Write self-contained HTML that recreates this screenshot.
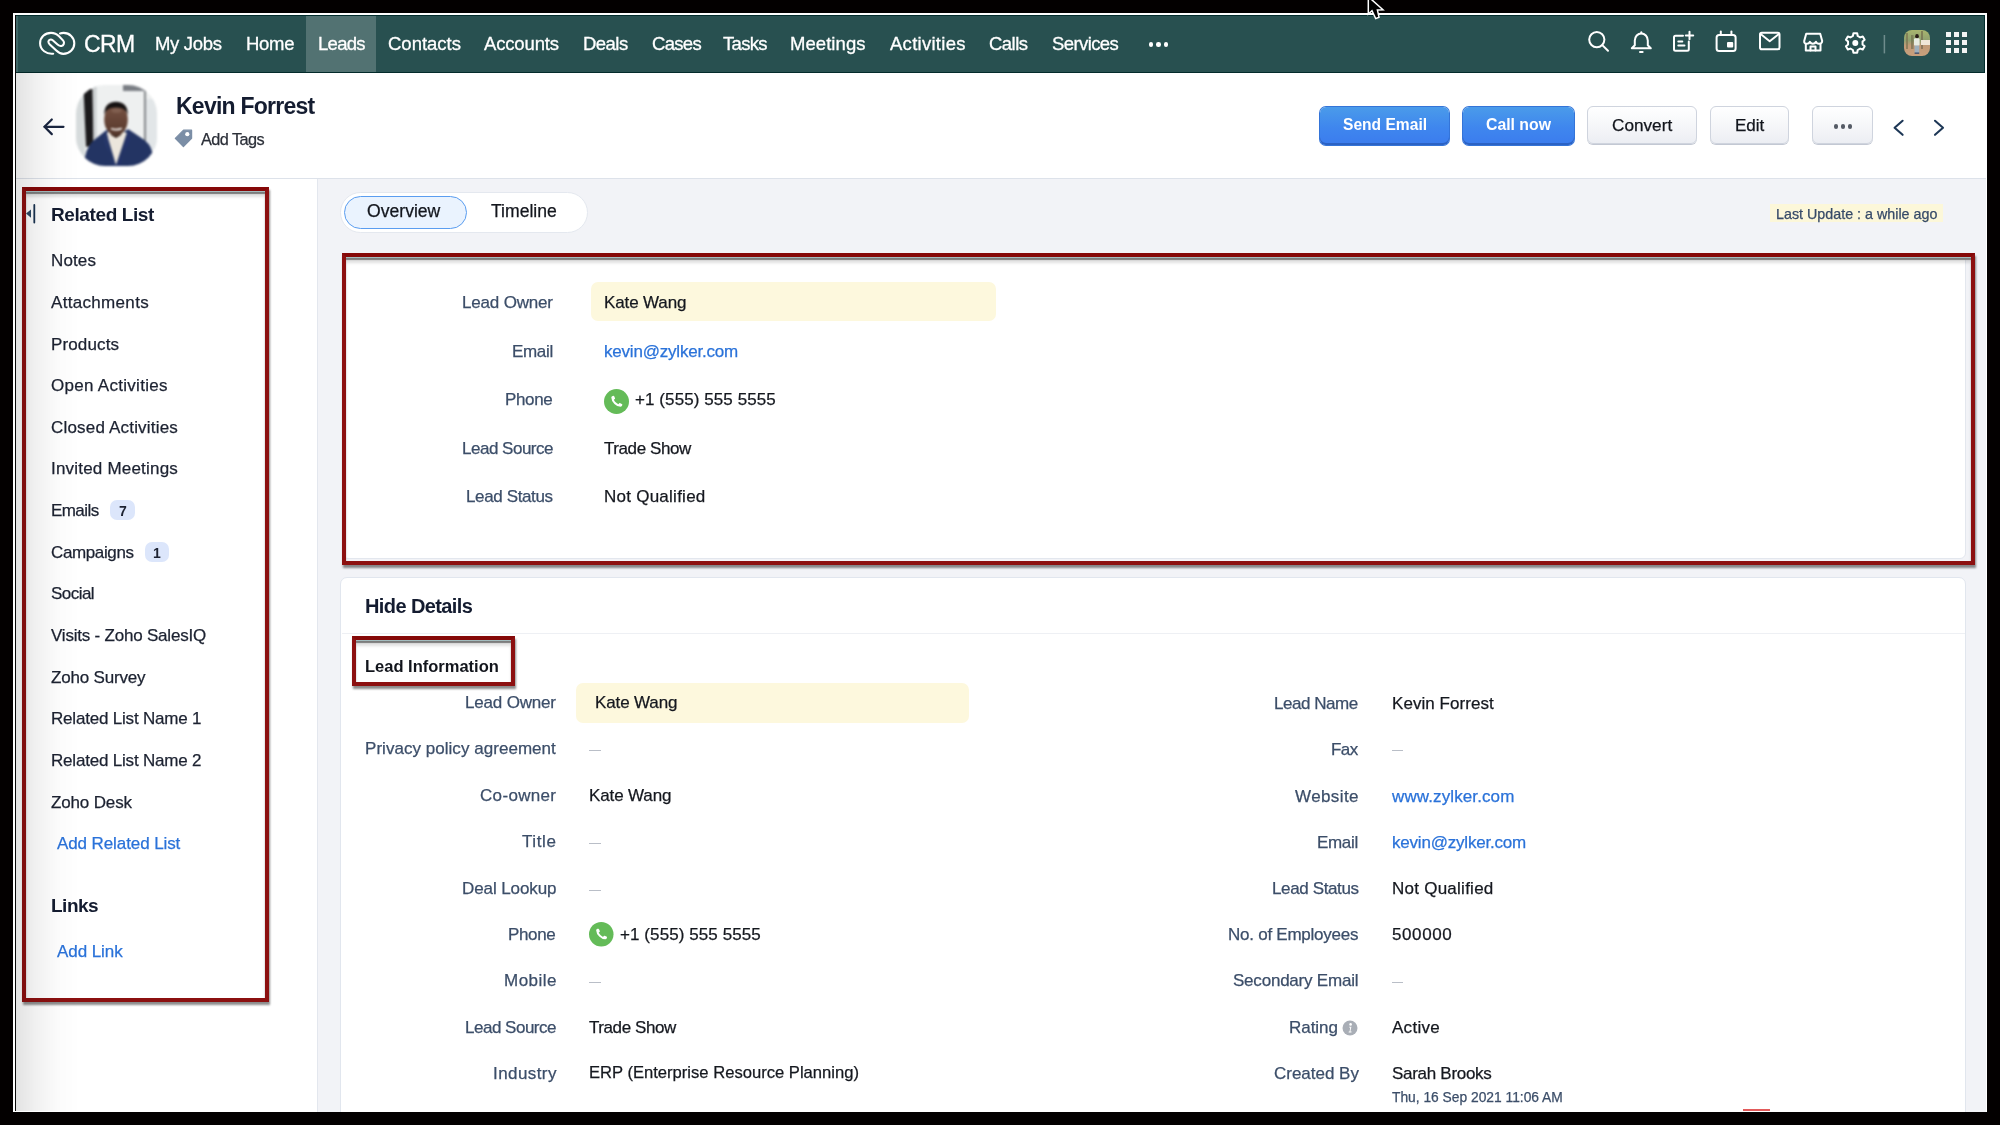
<!DOCTYPE html><html><head><meta charset="utf-8"><style>
*{margin:0;padding:0;box-sizing:border-box}
html,body{width:2000px;height:1125px;overflow:hidden;background:#030000;font-family:"Liberation Sans",sans-serif}
.t{position:absolute;white-space:nowrap;will-change:transform}
.r{position:absolute}
svg{position:absolute;overflow:visible}
</style></head><body><div class="r" style="left:13px;top:13px;width:1974px;height:1099px;background:#fff;"></div>
<div class="r" style="left:16px;top:15px;width:1969px;height:57px;background:#285050;border-top:1px solid #022c2c;border-right:1px solid #022c2c;"></div>
<div class="r" style="left:16px;top:16px;width:2px;height:56px;background:#3f6666;"></div>
<div class="r" style="left:306px;top:16px;width:70px;height:56px;background:#527272;"></div>
<div class="r" style="left:15px;top:72px;width:1970px;height:1px;background:#032b2b;"></div>
<div class="r" style="left:15px;top:73px;width:1971px;height:106px;background:#fff;border-bottom:1px solid #dde2ea;"></div>
<div class="r" style="left:15px;top:179px;width:303px;height:933px;background:#fff;border-right:1px solid #e3e7ee;"></div>
<div class="r" style="left:318px;top:179px;width:1668px;height:933px;background:#f2f3f7;"></div>
<div class="r" style="left:14.6px;top:15px;width:1.4000000000000004px;height:1096px;background:#0b0b0b;"></div>
<div class="t" style="top:32.53px;font-size:23px;line-height:23px;font-weight:400;color:#ffffff;letter-spacing:-0.600px;left:84.00px;-webkit-text-stroke:0.3px #fff;">CRM</div>
<div class="t" style="top:35.14px;font-size:18.5px;line-height:18.5px;font-weight:400;color:#ffffff;letter-spacing:-0.315px;left:155.00px;-webkit-text-stroke:0.3px #fff;">My Jobs</div>
<div class="t" style="top:35.14px;font-size:18.5px;line-height:18.5px;font-weight:400;color:#ffffff;letter-spacing:-0.286px;left:246.00px;-webkit-text-stroke:0.3px #fff;">Home</div>
<div class="t" style="top:35.14px;font-size:18.5px;line-height:18.5px;font-weight:400;color:#ffffff;letter-spacing:-0.700px;left:317.50px;-webkit-text-stroke:0.3px #fff;">Leads</div>
<div class="t" style="top:35.14px;font-size:18.5px;line-height:18.5px;font-weight:400;color:#ffffff;letter-spacing:-0.002px;left:387.60px;-webkit-text-stroke:0.3px #fff;">Contacts</div>
<div class="t" style="top:35.14px;font-size:18.5px;line-height:18.5px;font-weight:400;color:#ffffff;letter-spacing:-0.158px;left:484.00px;-webkit-text-stroke:0.3px #fff;">Accounts</div>
<div class="t" style="top:35.14px;font-size:18.5px;line-height:18.5px;font-weight:400;color:#ffffff;letter-spacing:-0.528px;left:583.30px;-webkit-text-stroke:0.3px #fff;">Deals</div>
<div class="t" style="top:35.14px;font-size:18.5px;line-height:18.5px;font-weight:400;color:#ffffff;letter-spacing:-0.700px;left:652.00px;-webkit-text-stroke:0.3px #fff;">Cases</div>
<div class="t" style="top:35.14px;font-size:18.5px;line-height:18.5px;font-weight:400;color:#ffffff;letter-spacing:-0.700px;left:723.00px;-webkit-text-stroke:0.3px #fff;">Tasks</div>
<div class="t" style="top:35.14px;font-size:18.5px;line-height:18.5px;font-weight:400;color:#ffffff;letter-spacing:0.060px;left:790.00px;-webkit-text-stroke:0.3px #fff;">Meetings</div>
<div class="t" style="top:35.14px;font-size:18.5px;line-height:18.5px;font-weight:400;color:#ffffff;letter-spacing:0.278px;left:889.50px;-webkit-text-stroke:0.3px #fff;">Activities</div>
<div class="t" style="top:35.14px;font-size:18.5px;line-height:18.5px;font-weight:400;color:#ffffff;letter-spacing:-0.531px;left:989.00px;-webkit-text-stroke:0.3px #fff;">Calls</div>
<div class="t" style="top:35.14px;font-size:18.5px;line-height:18.5px;font-weight:400;color:#ffffff;letter-spacing:-0.600px;left:1052.00px;-webkit-text-stroke:0.3px #fff;">Services</div>
<div class="r" style="left:1148.5px;top:42px;width:4.6px;height:4.6px;border-radius:50%;background:#fff"></div>
<div class="r" style="left:1156.1000000000001px;top:42px;width:4.6px;height:4.6px;border-radius:50%;background:#fff"></div>
<div class="r" style="left:1163.7px;top:42px;width:4.6px;height:4.6px;border-radius:50%;background:#fff"></div>
<svg width="40" height="30" style="left:37px;top:29px" viewBox="37 29 40 30">
<g fill="none" stroke="#fff" stroke-width="2.1" stroke-linecap="round">
<path d="M53.2 53.7 C46.5 54.4 40.1 50 40.1 43.3 C40.1 37.3 45 32.9 51 32.9 C54.5 32.9 57 34.2 59.3 36.5 L63.2 40.6 C64.8 42.4 63.9 45.6 61.3 46"/>
<path d="M61.3 46 C59.8 46.2 58.8 45.6 57.5 44.5 L52.7 40.3 C51 38.9 48.6 39.6 48.4 41.6 C48.3 42.7 48.9 43.5 49.8 44.4 L56.3 50.6 C58.3 52.6 60.5 53.9 63.3 53.9 C69.5 53.9 74.3 49.2 74.3 43.3 C74.3 37.5 69.5 32.9 63.6 32.9 C62.3 32.9 61 33.1 60 33.4"/>
</g></svg>
<svg width="400" height="40" style="left:1580px;top:25px" viewBox="1580 25 400 40">
<g fill="none" stroke="#ffffff" stroke-width="2" stroke-linecap="round" stroke-linejoin="round">
<circle cx="1596.8" cy="39.6" r="7.6"/>
<line x1="1602.3" y1="45.1" x2="1608" y2="50.8"/>
<path d="M1631.8 48.2 L1634.8 45.3 L1634.8 40.6 A6.5 7.2 0 0 1 1647.8 40.6 L1647.8 45.3 L1650.8 48.2 Z"/>
<line x1="1641.3" y1="32.2" x2="1641.3" y2="33.2"/>
<line x1="1640" y1="52" x2="1642.6" y2="52"/>
<path d="M1683 35.8 L1675.5 35.8 Q1674 35.8 1674 37.3 L1674 49.3 Q1674 50.8 1675.5 50.8 L1687.2 50.8 Q1688.8 50.8 1688.8 49.3 L1688.8 41.5"/>
<line x1="1678.3" y1="41.6" x2="1682.3" y2="41.6"/>
<line x1="1678.3" y1="45.6" x2="1684.5" y2="45.6"/>
<line x1="1689.5" y1="31.8" x2="1689.5" y2="39.2"/>
<line x1="1685.8" y1="35.5" x2="1693.2" y2="35.5"/>
<rect x="1716.6" y="35" width="19" height="16" rx="2.5"/>
<line x1="1720.8" y1="31.5" x2="1720.8" y2="35"/>
<line x1="1731.4" y1="31.5" x2="1731.4" y2="35"/>
<rect x="1760" y="32.8" width="19.5" height="16.4" rx="1.8"/>
<path d="M1760.6 34 L1769.7 41.2 L1778.9 34"/>
<path d="M1804.2 41 L1806.2 33.8 L1820.2 33.8 L1822.2 41 Q1822 43.8 1819 43.8 Q1816.5 43.8 1816 41.8 Q1815 43.8 1812.8 43.8 Q1810.8 43.8 1809.8 41.8 Q1809 43.8 1806.8 43.8 Q1804 43.8 1804.2 41 Z"/>
<path d="M1805.8 44 L1805.8 50.5 L1820.5 50.5 L1820.5 44"/>
<path d="M1810.5 50.5 L1810.5 46.5 L1815.5 46.5 L1815.5 50.5"/>
</g>
<rect x="1727" y="42" width="6.2" height="5.6" rx="1" fill="#ffffff"/>
<g transform="translate(1855.3 43)">
<path fill="none" stroke="#ffffff" stroke-width="2" stroke-linejoin="round" d="M-2.41 -7.00 L-1.89 -9.72 L1.89 -9.72 L2.41 -7.00 L4.85 -5.58 L7.47 -6.49 L9.36 -3.22 L7.26 -1.41 L7.26 1.41 L9.36 3.22 L7.47 6.49 L4.85 5.58 L2.41 7.00 L1.89 9.72 L-1.89 9.72 L-2.41 7.00 L-4.85 5.58 L-7.47 6.49 L-9.36 3.22 L-7.26 1.41 L-7.26 -1.41 L-9.36 -3.22 L-7.47 -6.49 L-4.85 -5.58 Z"/>
<circle r="3" fill="#ffffff"/>
</g>
<line x1="1884.4" y1="35" x2="1884.4" y2="53.4" stroke="#6f8c8c" stroke-width="1.5"/>
</svg>
<svg width="26" height="26" style="left:1904.2px;top:30.1px;filter:blur(0.75px)" viewBox="0 0 26 26">
<defs><clipPath id="ua"><rect width="26" height="26" rx="8"/></clipPath>
<filter id="ub"><feGaussianBlur stdDeviation="0.6"/></filter>
<linearGradient id="ug" x1="0" y1="0" x2="0" y2="1"><stop offset="0" stop-color="#a9b56e"/><stop offset="0.4" stop-color="#8fa070"/><stop offset="0.6" stop-color="#c09a78"/><stop offset="1" stop-color="#c9a07c"/></linearGradient></defs>
<g clip-path="url(#ua)"><g>
<rect width="26" height="26" fill="url(#ug)"/>
<rect x="2" y="3" width="2" height="16" fill="#7a7250" opacity="0.7"/>
<rect x="7" y="5" width="2.5" height="14" fill="#6e6a4a" opacity="0.6"/>
<rect x="17" y="1" width="2" height="18" fill="#6a6048" opacity="0.6"/>
<rect x="17" y="10" width="9" height="5" fill="#efe6d8"/>
<ellipse cx="13" cy="6.3" rx="1.8" ry="2.3" fill="#2a1d18"/>
<rect x="10" y="8.2" width="5.6" height="7.6" rx="1.2" fill="#e8ece2"/>
<rect x="10.6" y="15.6" width="4.6" height="7.4" fill="#9fb0bc"/>
<rect x="10.6" y="22.5" width="4.6" height="1.3" fill="#3a4a6a"/>
</g></g></svg>
<div class="r" style="left:1945.8px;top:32.2px;width:5.2000000000000455px;height:4.899999999999999px;background:#f4f4f4;"></div>
<div class="r" style="left:1953.9px;top:32.2px;width:5.199999999999818px;height:4.899999999999999px;background:#f4f4f4;"></div>
<div class="r" style="left:1962.0px;top:32.2px;width:5.2000000000000455px;height:4.899999999999999px;background:#f4f4f4;"></div>
<div class="r" style="left:1945.8px;top:40.3px;width:5.2000000000000455px;height:4.900000000000006px;background:#f4f4f4;"></div>
<div class="r" style="left:1953.9px;top:40.3px;width:5.199999999999818px;height:4.900000000000006px;background:#f4f4f4;"></div>
<div class="r" style="left:1962.0px;top:40.3px;width:5.2000000000000455px;height:4.900000000000006px;background:#f4f4f4;"></div>
<div class="r" style="left:1945.8px;top:48.4px;width:5.2000000000000455px;height:4.899999999999999px;background:#f4f4f4;"></div>
<div class="r" style="left:1953.9px;top:48.4px;width:5.199999999999818px;height:4.899999999999999px;background:#f4f4f4;"></div>
<div class="r" style="left:1962.0px;top:48.4px;width:5.2000000000000455px;height:4.899999999999999px;background:#f4f4f4;"></div>
<svg width="24" height="20" style="left:42px;top:117px" viewBox="42 117 24 20">
<g fill="none" stroke="#1a2640" stroke-width="2.2" stroke-linecap="round" stroke-linejoin="round">
<line x1="44.5" y1="126.8" x2="63.5" y2="126.8"/><path d="M51.8 119.5 L44.5 126.8 L51.8 134.1"/></g></svg>
<svg width="81" height="81" style="left:76px;top:85px;filter:blur(0.8px)" viewBox="0 0 81 81">
<defs><clipPath id="av"><rect x="0" y="0" width="81" height="81" rx="29" ry="29"/></clipPath>
<filter id="bl" x="-5%" y="-5%" width="110%" height="110%"><feGaussianBlur stdDeviation="0.5"/></filter>
<linearGradient id="fg" x1="0" y1="0" x2="0" y2="1"><stop offset="0" stop-color="#7a5444"/><stop offset="1" stop-color="#55372b"/></linearGradient></defs>
<g clip-path="url(#av)"><g>
<rect width="81" height="81" fill="#eef0f0"/>
<rect x="0" y="0" width="9" height="81" fill="#d6dbdc"/>
<path d="M7.5 4 L16.5 4 L17.5 60 L10 62 Z" fill="#1b1a1c"/>
<rect x="17.5" y="0" width="3" height="81" fill="#c9cdcf"/>
<rect x="47" y="0" width="22" height="6" fill="#7a7e84"/>
<rect x="68.2" y="6" width="1.6" height="56" fill="#6a6e72"/>
<rect x="70" y="14" width="11" height="50" fill="#e2e6e8"/>
<path d="M9 81 L9 72 Q12 58 20 53.5 L30.5 45 L40 50 L52.4 44.2 L64 52 Q74 58 76 66 L77 81 Z" fill="#233463"/>
<path d="M30.5 48 L40 80 L50.8 48 L45 45 L40 50 L35 45 Z" fill="#ece6dc"/>
<path d="M30.5 45 Q26 52 29 60 L40 81 L36 81 Z" fill="#26376a"/>
<path d="M52.4 44.2 Q56 52 52 60 L40 81 L44 81 Z" fill="#24336a"/>
<path d="M34 42 L46 42 L45 50 L40 53 L35 50 Z" fill="#3d261d"/>
<ellipse cx="40" cy="34.5" rx="11.8" ry="16" fill="url(#fg)"/>
<path d="M28.2 30 Q28 17 40 16.8 Q52 17 51.8 30 Q50 22 40 22.5 Q30 22 28.2 30 Z" fill="#161212"/>
<ellipse cx="40.5" cy="25.5" rx="5" ry="2.5" fill="#8a6a5c" opacity="0.6"/>
<path d="M35 43.6 Q40.5 46.5 46 43.4 Q40.5 45 35 43.6 Z" fill="#f4efea" stroke="#f4efea" stroke-width="1.2"/>
</g></g></svg>
<div class="t" style="top:95.03px;font-size:23px;line-height:23px;font-weight:700;color:#141c30;letter-spacing:-0.750px;left:175.50px;">Kevin Forrest</div>
<svg width="20" height="20" style="left:173px;top:128px" viewBox="173 128 20 20">
<path d="M183.5 130.2 L191.6 130.2 L191.6 138.3 L183.4 146.5 L175.3 138.4 Z" fill="#7b8ea6" stroke="#7b8ea6" stroke-width="1.2" stroke-linejoin="round"/>
<circle cx="187.3" cy="134.2" r="2.1" fill="#fff"/></svg>
<div class="t" style="top:130.90px;font-size:16.3px;line-height:16.3px;font-weight:400;color:#2b2f38;-webkit-text-stroke:0.25px #2b2f38;letter-spacing:-0.550px;left:201.00px;">Add Tags</div>
<div class="r" style="left:1319.5px;top:106.5px;width:129.0px;height:38.0px;background:linear-gradient(180deg,#4a9bea 0%,#3f86ee 55%,#3b7cee 100%);border-radius:6px;box-shadow:inset 0 -2px 0 #2b62c4, 0 0 0 1px #3474d8;"></div>
<div class="r" style="left:1462.5px;top:106.5px;width:111.5px;height:38.0px;background:linear-gradient(180deg,#4a9bea 0%,#3f86ee 55%,#3b7cee 100%);border-radius:6px;box-shadow:inset 0 -2px 0 #2b62c4, 0 0 0 1px #3474d8;"></div>
<div class="r" style="left:1587px;top:106.3px;width:110px;height:38.2px;background:linear-gradient(180deg,#ffffff 0%,#f4f5f8 60%,#eceef3 100%);border-radius:6px;border:1px solid #cfd4de;box-shadow:0 1px 0 #c3c8d3;"></div>
<div class="r" style="left:1710px;top:106.3px;width:79px;height:38.2px;background:linear-gradient(180deg,#ffffff 0%,#f4f5f8 60%,#eceef3 100%);border-radius:6px;border:1px solid #cfd4de;box-shadow:0 1px 0 #c3c8d3;"></div>
<div class="r" style="left:1812px;top:106.3px;width:60.5px;height:38.2px;background:linear-gradient(180deg,#ffffff 0%,#f4f5f8 60%,#eceef3 100%);border-radius:6px;border:1px solid #cfd4de;box-shadow:0 1px 0 #c3c8d3;"></div>
<div class="t" style="top:117.49px;font-size:15.6px;line-height:15.6px;font-weight:700;color:#fff;left:1342.50px;">Send Email</div>
<div class="t" style="top:117.32px;font-size:15.8px;line-height:15.8px;font-weight:700;color:#fff;left:1485.80px;">Call now</div>
<div class="t" style="top:116.64px;font-size:17.2px;line-height:17.2px;font-weight:400;color:#12151c;-webkit-text-stroke:0.25px #12151c;left:1612.00px;">Convert</div>
<div class="t" style="top:116.81px;font-size:17px;line-height:17px;font-weight:400;color:#12151c;-webkit-text-stroke:0.25px #12151c;left:1734.90px;">Edit</div>
<div class="r" style="left:1833.6px;top:124.2px;width:4.4px;height:4.4px;border-radius:50%;background:#555b66"></div>
<div class="r" style="left:1840.7px;top:124.2px;width:4.4px;height:4.4px;border-radius:50%;background:#555b66"></div>
<div class="r" style="left:1847.8px;top:124.2px;width:4.4px;height:4.4px;border-radius:50%;background:#555b66"></div>
<svg width="60" height="20" style="left:1890px;top:118px" viewBox="1890 118 60 20">
<g fill="none" stroke="#1d3756" stroke-width="2.1" stroke-linecap="round" stroke-linejoin="round">
<path d="M1902.6 120.8 L1894.6 127.8 L1902.6 134.8"/>
<path d="M1935 120.8 L1943 127.8 L1935 134.8"/></g></svg>
<svg width="14" height="22" style="left:24px;top:203px" viewBox="24 203 14 22">
<path d="M31 209.5 L26 213.6 L31 217.7 Z" fill="#2c4a66"/>
<line x1="34.3" y1="205" x2="34.3" y2="222.5" stroke="#1a3350" stroke-width="1.8" stroke-linecap="round"/></svg>
<div class="t" style="top:205.41px;font-size:19px;line-height:19px;font-weight:700;color:#141c30;letter-spacing:-0.400px;left:51.00px;">Related List</div>
<div class="t" style="top:251.61px;font-size:17px;line-height:17px;font-weight:400;color:#1c2231;-webkit-text-stroke:0.25px #1c2231;letter-spacing:0.120px;left:51.00px;">Notes</div>
<div class="t" style="top:294.31px;font-size:17px;line-height:17px;font-weight:400;color:#1c2231;-webkit-text-stroke:0.25px #1c2231;letter-spacing:0.320px;left:51.00px;">Attachments</div>
<div class="t" style="top:336.01px;font-size:17px;line-height:17px;font-weight:400;color:#1c2231;-webkit-text-stroke:0.25px #1c2231;letter-spacing:0.129px;left:51.00px;">Products</div>
<div class="t" style="top:377.21px;font-size:17px;line-height:17px;font-weight:400;color:#1c2231;-webkit-text-stroke:0.25px #1c2231;letter-spacing:0.289px;left:51.00px;">Open Activities</div>
<div class="t" style="top:419.01px;font-size:17px;line-height:17px;font-weight:400;color:#1c2231;-webkit-text-stroke:0.25px #1c2231;letter-spacing:0.189px;left:51.00px;">Closed Activities</div>
<div class="t" style="top:460.41px;font-size:17px;line-height:17px;font-weight:400;color:#1c2231;-webkit-text-stroke:0.25px #1c2231;letter-spacing:0.200px;left:51.00px;">Invited Meetings</div>
<div class="t" style="top:502.11px;font-size:17px;line-height:17px;font-weight:400;color:#1c2231;-webkit-text-stroke:0.25px #1c2231;letter-spacing:-0.563px;left:51.00px;">Emails</div>
<div class="t" style="top:544.21px;font-size:17px;line-height:17px;font-weight:400;color:#1c2231;-webkit-text-stroke:0.25px #1c2231;letter-spacing:-0.375px;left:51.00px;">Campaigns</div>
<div class="t" style="top:585.41px;font-size:17px;line-height:17px;font-weight:400;color:#1c2231;-webkit-text-stroke:0.25px #1c2231;letter-spacing:-0.542px;left:51.00px;">Social</div>
<div class="t" style="top:626.61px;font-size:17px;line-height:17px;font-weight:400;color:#1c2231;-webkit-text-stroke:0.25px #1c2231;letter-spacing:-0.208px;left:51.00px;">Visits - Zoho SalesIQ</div>
<div class="t" style="top:669.21px;font-size:17px;line-height:17px;font-weight:400;color:#1c2231;-webkit-text-stroke:0.25px #1c2231;letter-spacing:-0.179px;left:51.00px;">Zoho Survey</div>
<div class="t" style="top:710.41px;font-size:17px;line-height:17px;font-weight:400;color:#1c2231;-webkit-text-stroke:0.25px #1c2231;letter-spacing:-0.196px;left:51.00px;">Related List Name 1</div>
<div class="t" style="top:752.01px;font-size:17px;line-height:17px;font-weight:400;color:#1c2231;-webkit-text-stroke:0.25px #1c2231;letter-spacing:-0.196px;left:51.00px;">Related List Name 2</div>
<div class="t" style="top:794.01px;font-size:17px;line-height:17px;font-weight:400;color:#1c2231;-webkit-text-stroke:0.25px #1c2231;letter-spacing:-0.150px;left:51.00px;">Zoho Desk</div>
<div class="r" style="left:110px;top:500px;width:25px;height:20px;background:#dce6fb;border-radius:7px;"></div>
<div class="t" style="top:504.15px;font-size:14px;line-height:14px;font-weight:700;color:#1c2231;left:122.50px;transform:translateX(-50%);">7</div>
<div class="r" style="left:144.5px;top:541.5px;width:24.5px;height:20.5px;background:#dce6fb;border-radius:7px;"></div>
<div class="t" style="top:545.65px;font-size:14px;line-height:14px;font-weight:700;color:#1c2231;left:156.80px;transform:translateX(-50%);">1</div>
<div class="t" style="top:835.01px;font-size:17px;line-height:17px;font-weight:400;color:#2a72d9;-webkit-text-stroke:0.25px #2a72d9;letter-spacing:-0.097px;left:56.70px;">Add Related List</div>
<div class="t" style="top:895.91px;font-size:19px;line-height:19px;font-weight:700;color:#141c30;letter-spacing:-0.500px;left:51.00px;">Links</div>
<div class="t" style="top:943.21px;font-size:17px;line-height:17px;font-weight:400;color:#2a72d9;-webkit-text-stroke:0.25px #2a72d9;letter-spacing:-0.067px;left:56.70px;">Add Link</div>
<div class="r" style="left:340px;top:192px;width:248px;height:41px;background:#fff;border-radius:21px;border:1px solid #e4e8ef;"></div>
<div class="r" style="left:344px;top:196px;width:123px;height:33px;background:#eaf3fe;border-radius:17px;border:1.5px solid #5a9df0;"></div>
<div class="t" style="top:203.40px;font-size:17.6px;line-height:17.6px;font-weight:400;color:#13161d;-webkit-text-stroke:0.25px #13161d;left:367.00px;">Overview</div>
<div class="t" style="top:203.40px;font-size:17.6px;line-height:17.6px;font-weight:400;color:#13161d;-webkit-text-stroke:0.25px #13161d;left:491.00px;">Timeline</div>
<div class="r" style="left:1770px;top:204px;width:173px;height:18px;background:#fcf7d9;"></div>
<div class="t" style="top:207.19px;font-size:14.3px;line-height:14.3px;font-weight:400;color:#364a68;-webkit-text-stroke:0.25px #364a68;left:1776.00px;">Last Update : a while ago</div>
<div class="r" style="left:342px;top:254px;width:1624px;height:305px;background:#fff;border-radius:6px;border:1px solid #e3e7ee;"></div>
<div class="r" style="left:591px;top:282px;width:405px;height:39px;background:#fdf8dd;border-radius:7px;"></div>
<div class="t" style="top:293.91px;font-size:17px;line-height:17px;font-weight:400;color:#3c4e69;-webkit-text-stroke:0.25px #3c4e69;letter-spacing:-0.181px;right:1447.18px;text-align:right;">Lead Owner</div>
<div class="t" style="top:293.91px;font-size:17px;line-height:17px;font-weight:400;color:#15181f;-webkit-text-stroke:0.25px #15181f;letter-spacing:-0.123px;left:604.00px;">Kate Wang</div>
<div class="t" style="top:343.11px;font-size:17px;line-height:17px;font-weight:400;color:#3c4e69;-webkit-text-stroke:0.25px #3c4e69;letter-spacing:-0.329px;right:1447.33px;text-align:right;">Email</div>
<div class="t" style="top:343.11px;font-size:17px;line-height:17px;font-weight:400;color:#2a72d9;-webkit-text-stroke:0.25px #2a72d9;letter-spacing:-0.197px;left:604.00px;">kevin@zylker.com</div>
<div class="t" style="top:391.41px;font-size:17px;line-height:17px;font-weight:400;color:#3c4e69;-webkit-text-stroke:0.25px #3c4e69;letter-spacing:-0.343px;right:1447.34px;text-align:right;">Phone</div>
<div class="t" style="top:391.41px;font-size:17px;line-height:17px;font-weight:400;color:#15181f;-webkit-text-stroke:0.25px #15181f;letter-spacing:0.086px;left:635.00px;">+1 (555) 555 5555</div>
<div class="t" style="top:440.41px;font-size:17px;line-height:17px;font-weight:400;color:#3c4e69;-webkit-text-stroke:0.25px #3c4e69;letter-spacing:-0.491px;right:1447.49px;text-align:right;">Lead Source</div>
<div class="t" style="top:440.41px;font-size:17px;line-height:17px;font-weight:400;color:#15181f;-webkit-text-stroke:0.25px #15181f;letter-spacing:-0.415px;left:604.00px;">Trade Show</div>
<div class="t" style="top:488.41px;font-size:17px;line-height:17px;font-weight:400;color:#3c4e69;-webkit-text-stroke:0.25px #3c4e69;letter-spacing:-0.375px;right:1447.38px;text-align:right;">Lead Status</div>
<div class="t" style="top:488.41px;font-size:17px;line-height:17px;font-weight:400;color:#15181f;-webkit-text-stroke:0.25px #15181f;letter-spacing:0.252px;left:604.00px;">Not Qualified</div>
<svg width="25" height="25" style="left:603.5px;top:389px" viewBox="0 0 24 24">
<circle cx="12" cy="12" r="12" fill="#64bb58"/>
<path d="M8.3 6.6 Q7.2 7 7 8.2 Q7.1 11.6 10 14.3 Q12.7 17 15.9 17 Q17.1 16.8 17.5 15.7 L17.6 14.9 Q17.5 14.5 17.1 14.3 L15.2 13.5 Q14.7 13.4 14.4 13.8 L13.8 14.6 Q12.3 13.9 11.2 12.8 Q10.1 11.7 9.5 10.3 L10.3 9.7 Q10.7 9.4 10.6 8.9 L9.8 7 Q9.6 6.6 9.2 6.5 Z" fill="#fff"/></svg>
<div class="r" style="left:340px;top:577px;width:1626px;height:548px;background:#fff;border-radius:7px;border:1px solid #e1e6ee;"></div>
<div class="r" style="left:342px;top:633px;width:1623px;height:1px;background:#eef0f4;"></div>
<div class="t" style="top:596.27px;font-size:20px;line-height:20px;font-weight:700;color:#141c30;letter-spacing:-0.600px;left:365.00px;">Hide Details</div>
<div class="t" style="top:658.03px;font-size:16.5px;line-height:16.5px;font-weight:700;color:#12151c;left:365.00px;">Lead Information</div>
<div class="r" style="left:576px;top:682.5px;width:393px;height:40.5px;background:#fdf8dd;border-radius:7px;"></div>
<div class="t" style="top:694.41px;font-size:17px;line-height:17px;font-weight:400;color:#3c4e69;-webkit-text-stroke:0.25px #3c4e69;letter-spacing:-0.181px;right:1444.18px;text-align:right;">Lead Owner</div>
<div class="t" style="top:694.41px;font-size:17px;line-height:17px;font-weight:400;color:#15181f;-webkit-text-stroke:0.25px #15181f;letter-spacing:-0.123px;left:595.00px;">Kate Wang</div>
<div class="t" style="top:739.61px;font-size:17px;line-height:17px;font-weight:400;color:#3c4e69;-webkit-text-stroke:0.25px #3c4e69;letter-spacing:0.038px;right:1443.96px;text-align:right;">Privacy policy agreement</div>
<div class="r" style="left:589px;top:750px;width:12px;height:1px;background:#b9bec7;"></div>
<div class="t" style="top:786.81px;font-size:17px;line-height:17px;font-weight:400;color:#3c4e69;-webkit-text-stroke:0.25px #3c4e69;letter-spacing:0.328px;right:1443.67px;text-align:right;">Co-owner</div>
<div class="t" style="top:786.81px;font-size:17px;line-height:17px;font-weight:400;color:#15181f;-webkit-text-stroke:0.25px #15181f;letter-spacing:-0.123px;left:589.00px;">Kate Wang</div>
<div class="t" style="top:833.41px;font-size:17px;line-height:17px;font-weight:400;color:#3c4e69;-webkit-text-stroke:0.25px #3c4e69;letter-spacing:0.600px;right:1443.40px;text-align:right;">Title</div>
<div class="r" style="left:589px;top:843px;width:12px;height:1px;background:#b9bec7;"></div>
<div class="t" style="top:879.61px;font-size:17px;line-height:17px;font-weight:400;color:#3c4e69;-webkit-text-stroke:0.25px #3c4e69;letter-spacing:-0.097px;right:1444.10px;text-align:right;">Deal Lookup</div>
<div class="r" style="left:589px;top:890px;width:12px;height:1px;background:#b9bec7;"></div>
<div class="t" style="top:925.81px;font-size:17px;line-height:17px;font-weight:400;color:#3c4e69;-webkit-text-stroke:0.25px #3c4e69;letter-spacing:-0.343px;right:1444.34px;text-align:right;">Phone</div>
<div class="t" style="top:925.81px;font-size:17px;line-height:17px;font-weight:400;color:#15181f;-webkit-text-stroke:0.25px #15181f;letter-spacing:0.086px;left:620.00px;">+1 (555) 555 5555</div>
<div class="t" style="top:972.41px;font-size:17px;line-height:17px;font-weight:400;color:#3c4e69;-webkit-text-stroke:0.25px #3c4e69;letter-spacing:0.481px;right:1443.52px;text-align:right;">Mobile</div>
<div class="r" style="left:589px;top:982px;width:12px;height:1px;background:#b9bec7;"></div>
<div class="t" style="top:1018.91px;font-size:17px;line-height:17px;font-weight:400;color:#3c4e69;-webkit-text-stroke:0.25px #3c4e69;letter-spacing:-0.491px;right:1444.49px;text-align:right;">Lead Source</div>
<div class="t" style="top:1018.91px;font-size:17px;line-height:17px;font-weight:400;color:#15181f;-webkit-text-stroke:0.25px #15181f;letter-spacing:-0.415px;left:589.00px;">Trade Show</div>
<div class="t" style="top:1065.11px;font-size:17px;line-height:17px;font-weight:400;color:#3c4e69;-webkit-text-stroke:0.25px #3c4e69;letter-spacing:0.417px;right:1443.58px;text-align:right;">Industry</div>
<div class="t" style="top:1065.44px;font-size:16.6px;line-height:16.6px;font-weight:400;color:#15181f;-webkit-text-stroke:0.25px #15181f;left:589.00px;">ERP (Enterprise Resource Planning)</div>
<svg width="24.5" height="24.5" style="left:589.2px;top:922.3px" viewBox="0 0 24 24">
<circle cx="12" cy="12" r="12" fill="#64bb58"/>
<path d="M8.3 6.6 Q7.2 7 7 8.2 Q7.1 11.6 10 14.3 Q12.7 17 15.9 17 Q17.1 16.8 17.5 15.7 L17.6 14.9 Q17.5 14.5 17.1 14.3 L15.2 13.5 Q14.7 13.4 14.4 13.8 L13.8 14.6 Q12.3 13.9 11.2 12.8 Q10.1 11.7 9.5 10.3 L10.3 9.7 Q10.7 9.4 10.6 8.9 L9.8 7 Q9.6 6.6 9.2 6.5 Z" fill="#fff"/></svg>
<div class="t" style="top:694.91px;font-size:17px;line-height:17px;font-weight:400;color:#3c4e69;-webkit-text-stroke:0.25px #3c4e69;letter-spacing:-0.461px;right:641.96px;text-align:right;">Lead Name</div>
<div class="t" style="top:694.91px;font-size:17px;line-height:17px;font-weight:400;color:#15181f;-webkit-text-stroke:0.25px #15181f;letter-spacing:0.051px;left:1391.70px;">Kevin Forrest</div>
<div class="t" style="top:740.61px;font-size:17px;line-height:17px;font-weight:400;color:#3c4e69;-webkit-text-stroke:0.25px #3c4e69;letter-spacing:-0.600px;right:642.10px;text-align:right;">Fax</div>
<div class="r" style="left:1391.5px;top:750px;width:11.5px;height:1px;background:#b9bec7;"></div>
<div class="t" style="top:787.61px;font-size:17px;line-height:17px;font-weight:400;color:#3c4e69;-webkit-text-stroke:0.25px #3c4e69;letter-spacing:0.398px;right:641.10px;text-align:right;">Website</div>
<div class="t" style="top:787.61px;font-size:17px;line-height:17px;font-weight:400;color:#2a72d9;-webkit-text-stroke:0.25px #2a72d9;letter-spacing:0.106px;left:1391.70px;">www.zylker.com</div>
<div class="t" style="top:833.81px;font-size:17px;line-height:17px;font-weight:400;color:#3c4e69;-webkit-text-stroke:0.25px #3c4e69;letter-spacing:-0.329px;right:641.83px;text-align:right;">Email</div>
<div class="t" style="top:833.81px;font-size:17px;line-height:17px;font-weight:400;color:#2a72d9;-webkit-text-stroke:0.25px #2a72d9;letter-spacing:-0.197px;left:1391.70px;">kevin@zylker.com</div>
<div class="t" style="top:880.01px;font-size:17px;line-height:17px;font-weight:400;color:#3c4e69;-webkit-text-stroke:0.25px #3c4e69;letter-spacing:-0.375px;right:641.88px;text-align:right;">Lead Status</div>
<div class="t" style="top:880.01px;font-size:17px;line-height:17px;font-weight:400;color:#15181f;-webkit-text-stroke:0.25px #15181f;letter-spacing:0.252px;left:1391.70px;">Not Qualified</div>
<div class="t" style="top:925.61px;font-size:17px;line-height:17px;font-weight:400;color:#3c4e69;-webkit-text-stroke:0.25px #3c4e69;letter-spacing:-0.246px;right:641.75px;text-align:right;">No. of Employees</div>
<div class="t" style="top:925.61px;font-size:17px;line-height:17px;font-weight:400;color:#15181f;-webkit-text-stroke:0.25px #15181f;letter-spacing:0.600px;left:1391.70px;">500000</div>
<div class="t" style="top:972.21px;font-size:17px;line-height:17px;font-weight:400;color:#3c4e69;-webkit-text-stroke:0.25px #3c4e69;letter-spacing:-0.215px;right:641.72px;text-align:right;">Secondary Email</div>
<div class="r" style="left:1391.5px;top:982px;width:11.5px;height:1px;background:#b9bec7;"></div>
<div class="t" style="top:1018.91px;font-size:17px;line-height:17px;font-weight:400;color:#3c4e69;-webkit-text-stroke:0.25px #3c4e69;letter-spacing:-0.028px;right:662.53px;text-align:right;">Rating</div>
<svg width="16" height="16" style="left:1342px;top:1019.5px" viewBox="0 0 16 16"><circle cx="8" cy="8" r="7.5" fill="#a9aeb6"/><circle cx="8.6" cy="4.4" r="1.3" fill="#fff"/><path d="M7.2 6.8 L9.4 6.8 L8.4 11.6 L9.6 11.6 L9.4 12.4 L6.6 12.4 L6.8 11.6 L7.6 11.6 L8.2 7.6 L7.1 7.6 Z" fill="#fff"/></svg>
<div class="t" style="top:1018.91px;font-size:17px;line-height:17px;font-weight:400;color:#15181f;-webkit-text-stroke:0.25px #15181f;letter-spacing:0.281px;left:1391.70px;">Active</div>
<div class="t" style="top:1064.61px;font-size:17px;line-height:17px;font-weight:400;color:#3c4e69;-webkit-text-stroke:0.25px #3c4e69;letter-spacing:-0.016px;right:641.52px;text-align:right;">Created By</div>
<div class="t" style="top:1064.61px;font-size:17px;line-height:17px;font-weight:400;color:#15181f;-webkit-text-stroke:0.25px #15181f;letter-spacing:-0.291px;left:1391.70px;">Sarah Brooks</div>
<div class="t" style="top:1090.82px;font-size:13.8px;line-height:13.8px;font-weight:400;color:#3c4e69;-webkit-text-stroke:0.25px #3c4e69;left:1391.70px;">Thu, 16 Sep 2021 11:06 AM</div>
<div class="r" style="left:1743px;top:1108.5px;width:27px;height:2.5px;background:#e25a5a;"></div>
<div class="r" style="left:22px;top:187px;width:247px;height:815px;border:4px solid #8c1010;border-top-color:#850808;box-shadow:inset 0 1px 0 #a3bcbe, inset 0 3px 1px #7c7c7c, inset 0 6px 3px rgba(0,0,0,0.12), 1px 3px 2px rgba(0,0,0,0.45);"></div>
<div class="r" style="left:342px;top:253px;width:1633px;height:312px;border:4px solid #8c1010;border-top-color:#850808;box-shadow:inset 0 1px 0 #a3bcbe, inset 0 3px 1px #7c7c7c, inset 0 6px 3px rgba(0,0,0,0.12), 1px 3px 2px rgba(0,0,0,0.45);"></div>
<div class="r" style="left:352px;top:636px;width:163px;height:50px;border:4px solid #8c1010;border-top-color:#850808;box-shadow:inset 0 1px 0 #a3bcbe, inset 0 3px 1px #7c7c7c, inset 0 6px 3px rgba(0,0,0,0.12), 1px 3px 2px rgba(0,0,0,0.45);"></div>
<div class="r" style="left:0px;top:1112px;width:2000px;height:13px;background:#030000;"></div>
<svg width="30" height="30" style="left:1360px;top:-5px" viewBox="1360 -5 30 30">
<path d="M1368.3 -3.3 L1368.3 14 L1372 10.8 L1375.7 18.6 L1379 17.2 L1377.4 9.9 L1383 9.7 Z" fill="#000" stroke="#fff" stroke-width="1.5" stroke-linejoin="miter"/></svg>
<div class="r" style="left:16px;top:72px;width:64px;height:1039px;background:linear-gradient(90deg,rgba(0,0,0,0.11) 0%,rgba(0,0,0,0.06) 30%,rgba(0,0,0,0.015) 65%,rgba(0,0,0,0) 100%);pointer-events:none;"></div></body></html>
